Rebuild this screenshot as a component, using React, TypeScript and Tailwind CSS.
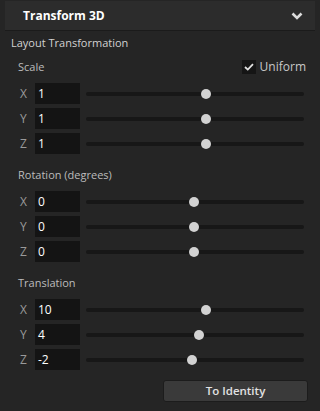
import React from "react";

type Row = { axis: string; value: string; pos: number };

const sections: { title: string; rows: Row[]; uniform?: boolean }[] = [
  {
    title: "Scale",
    uniform: true,
    rows: [
      { axis: "X", value: "1", pos: 120 },
      { axis: "Y", value: "1", pos: 120 },
      { axis: "Z", value: "1", pos: 120 },
    ],
  },
  {
    title: "Rotation (degrees)",
    rows: [
      { axis: "X", value: "0", pos: 108 },
      { axis: "Y", value: "0", pos: 108 },
      { axis: "Z", value: "0", pos: 108 },
    ],
  },
  {
    title: "Translation",
    rows: [
      { axis: "X", value: "10", pos: 120 },
      { axis: "Y", value: "4", pos: 113 },
      { axis: "Z", value: "-2", pos: 106 },
    ],
  },
];

function SliderRow({ row }: { row: Row }) {
  return (
    <div className="flex items-center h-[21px]">
      <span className="w-[15px] ml-[20px] text-[#9a9a9a] text-[12px]">{row.axis}</span>
      <div className="w-[45px] h-[21px] bg-[#141414] flex items-center pl-[3px] text-white text-[12px]">
        {row.value}
      </div>
      <div className="relative ml-[6px] w-[218px] h-[4px] rounded-full bg-[#171717]">
        <div
          className="absolute top-[-3px] w-[10px] h-[10px] rounded-full bg-[#d2d2d2]"
          style={{ left: row.pos - 5 }}
        />
      </div>
    </div>
  );
}

export default function App() {
  return (
    <div
      className="w-[320px] h-[411px] bg-[#252525] text-[11px] overflow-hidden"
      style={{ fontFamily: '"Open Sans", "Noto Sans", sans-serif' }}
    >
      <div className="mx-[5px] mt-[1px] h-[30px] bg-[#2c2c2c] border-b border-[#1b1b1b] flex items-center justify-between pl-[18px] pr-[12px]">
        <span className="text-white font-bold text-[12px]">Transform 3D</span>
        <svg width="12" height="8" viewBox="0 0 12 8">
          <path d="M1.5 1.5 L6 6 L10.5 1.5" fill="none" stroke="#dcdcdc" strokeWidth="2.6" />
        </svg>
      </div>

      <div className="pl-[11px] h-[20px] mt-[2px] flex items-center text-[#d2d2d2] text-[11px]">
        Layout Transformation
      </div>

      <div className="flex flex-col">
        {sections.map((s, i) => (
          <div key={s.title} className={i === 0 ? "mt-[4px]" : "mt-[11px]"}>
            <div className="h-[20px] flex items-center justify-between pl-[18px] pr-[14px] text-[#bcbcbc]">
              <span>{s.title}</span>
              {s.uniform && (
                <span className="flex items-center gap-[4px]">
                  <span className="w-[14px] h-[14px] bg-[#151515] flex items-center justify-center">
                    <svg width="10" height="8" viewBox="0 0 10 8">
                      <path d="M1 4 L3.8 6.6 L9 1.2" fill="none" stroke="#e0e0e0" strokeWidth="1.8" />
                    </svg>
                  </span>
                  <span className="text-[#c8c8c8] text-[12px]">Uniform</span>
                </span>
              )}
            </div>
            <div className="mt-[6px] flex flex-col gap-[4px]">
              {s.rows.map((r) => (
                <SliderRow key={r.axis} row={r} />
              ))}
            </div>
          </div>
        ))}
      </div>

      <div className="flex justify-end pr-[12px] mt-[10px]">
        <button className="w-[145px] h-[22px] bg-[#3a3a3a] border border-[#1c1c1c] rounded-[3px] text-[#e2e2e2] font-semibold text-[11.5px]">
          To Identity
        </button>
      </div>
    </div>
  );
}
